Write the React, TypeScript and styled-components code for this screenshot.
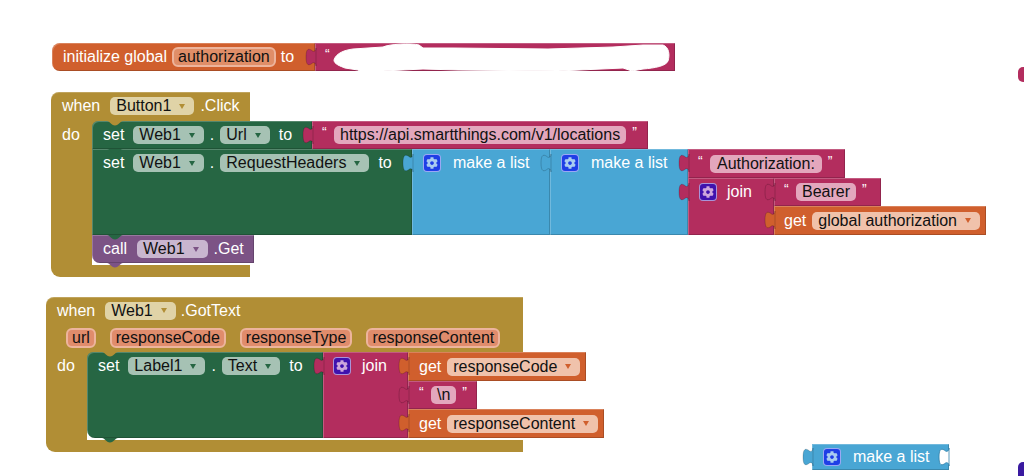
import styled, { createGlobalStyle } from "styled-components";
import { FaCog } from "react-icons/fa";

const ORANGE = "#d05f2d";
const MUSTARD = "#b18e35";
const GREEN = "#266643";
const PINK = "#b32d5e";
const BLUE = "#49a6d4";
const PURPLE = "#7c5385";

const GlobalStyle = createGlobalStyle`
  html, body {
    margin: 0;
    background: #fff;
    overflow: hidden;
  }
  body {
    font-family: "Liberation Sans", Arial, sans-serif;
    font-size: 16px;
    color: #fff;
  }
`;

const Canvas = styled.div`
  position: relative;
  width: 1024px;
  height: 476px;
  overflow: hidden;
  background: #fff;
`;

// top level blocks sit wherever the user dropped them on the workspace
const Placed = styled.div<{ $x: number; $y: number }>`
  position: absolute;
  left: ${(p) => p.$x}px;
  top: ${(p) => p.$y}px;
`;

const Row = styled.div`
  display: flex;
  align-items: flex-start;
`;

const Column = styled.div`
  display: flex;
  flex-direction: column;
`;

const Block = styled.div<{
  $color: string;
  $w: number;
  $h?: number;
  $radius?: string;
}>`
  position: relative;
  box-sizing: border-box;
  flex: none;
  width: ${(p) => p.$w}px;
  height: ${(p) => p.$h ?? 28}px;
  background: ${(p) => p.$color};
  border-radius: ${(p) => p.$radius ?? "0"};
  box-shadow: inset 1px 1px 0 rgba(255, 255, 255, 0.22),
    inset -1px -1px 0 rgba(0, 0, 0, 0.18);
`;

// shows mustard in the rounded top left corner of a first statement
const Backed = styled.div`
  flex: none;
  background: linear-gradient(${MUSTARD} 50%, transparent 50%);
`;

const Fields = styled.div<{ $pad?: number; $gap?: number; $height?: number }>`
  display: flex;
  align-items: center;
  height: ${(p) => p.$height ?? 28}px;
  padding-left: ${(p) => p.$pad ?? 11}px;
  gap: ${(p) => p.$gap ?? 9}px;
  white-space: nowrap;
`;

const Label = styled.span<{ $nudge?: number }>`
  color: #fff;
  margin-left: ${(p) => p.$nudge ?? 0}px;
`;

const Dot = styled.span`
  color: #fff;
  margin: 0 -3px;
`;

const Quote = styled.span`
  color: #fff;
  width: 6px;
  font-size: 14px;
  line-height: 14px;
  margin-top: -6px;
`;

const Pill = styled.span<{ $bg: string; $pad?: number }>`
  display: inline-flex;
  align-items: center;
  box-sizing: border-box;
  height: 18px;
  padding: 0 ${(p) => p.$pad ?? 6}px;
  color: #111;
  background: ${(p) => p.$bg};
  border-radius: 5px;
`;

const DropPill = styled(Pill)`
  padding-right: 9px;
`;

const ParamPill = styled(Pill)`
  height: 20px;
  border: 2px solid #edb49c;
  padding: 0 4px;
  border-radius: 6px;
`;

const Arrow = styled.i<{ $color: string }>`
  flex: none;
  width: 0;
  height: 0;
  margin-left: 8px;
  border-left: 3.5px solid transparent;
  border-right: 3.5px solid transparent;
  border-top: 5px solid ${(p) => p.$color};
`;

const GearBox = styled.span<{ $bg: string; $fg: string }>`
  display: inline-flex;
  align-items: center;
  justify-content: center;
  box-sizing: border-box;
  width: 18px;
  height: 18px;
  color: ${(p) => p.$fg};
  background: ${(p) => p.$bg};
  border: 1px solid rgba(255, 255, 255, 0.55);
  border-radius: 4px;
  font-size: 12px;
`;

const TabSvg = styled.svg<{ $top?: number; $right?: boolean }>`
  position: absolute;
  top: ${(p) => p.$top ?? 6}px;
  ${(p) => (p.$right ? "right: 0;" : "left: -9px;")}
  width: 10px;
  height: 16px;
  z-index: 2;
  overflow: visible;
`;

const NotchSvg = styled.svg<{ $left: number }>`
  position: absolute;
  left: ${(p) => p.$left}px;
  bottom: -5px;
  width: 16px;
  height: 5px;
  z-index: 3;
  overflow: visible;
`;

const HatTop = styled.div<{ $w: number; $h: number }>`
  position: relative;
  box-sizing: border-box;
  width: ${(p) => p.$w}px;
  height: ${(p) => p.$h}px;
  background: ${MUSTARD};
  border-radius: 8px 0 0 0;
  box-shadow: inset 0 1px 0 rgba(255, 255, 255, 0.2);
`;

const HatMiddle = styled.div`
  display: flex;
  align-items: stretch;
`;

const DoColumn = styled.div`
  flex: none;
  width: 41px;
  background: ${MUSTARD};
`;

const Statements = styled.div`
  display: flex;
  flex-direction: column;
  padding-bottom: 2px;
  & > * {
    flex: none;
  }
`;

const HatFoot = styled.div<{ $w: number }>`
  width: ${(p) => p.$w}px;
  height: 12px;
  background: ${MUSTARD};
  border-radius: 0 0 0 9px;
`;

const Scribble = styled.svg`
  position: absolute;
  left: 0;
  top: 0;
  width: 360px;
  height: 32px;
  overflow: visible;
  z-index: 2;
`;

const OffscreenBlob = styled.div<{ $top: number; $h: number; $color: string }>`
  position: absolute;
  left: 1018px;
  top: ${(p) => p.$top}px;
  width: 14px;
  height: ${(p) => p.$h}px;
  background: ${(p) => p.$color};
  border-radius: 5px;
`;

function Tab({
  fill,
  stroke,
  top,
  right,
}: {
  fill: string;
  stroke?: string;
  top?: number;
  right?: boolean;
}) {
  return (
    <TabSvg viewBox="0 0 10 16" $top={top} $right={right}>
      <path
        d="M10 -1 C10 2 8 3 6.5 2 C3 -1 0 -1 0 8 C0 17 3 17 6.5 14 C8 13 10 14 10 17 Z"
        fill={fill}
        stroke={stroke ?? "rgba(0,0,0,0.22)"}
        strokeWidth="0.8"
      />
    </TabSvg>
  );
}

function Notch({ color, left }: { color: string; left: number }) {
  return (
    <NotchSvg viewBox="0 0 16 5" $left={left}>
      <path d="M0 0 C3 0 4 4.5 8 4.5 C12 4.5 13 0 16 0 Z" fill={color} />
    </NotchSvg>
  );
}

function Dropdown({
  bg,
  arrow,
  children,
}: {
  bg: string;
  arrow: string;
  children: string;
}) {
  return (
    <DropPill $bg={bg}>
      {children}
      <Arrow $color={arrow} />
    </DropPill>
  );
}

function Mutator({ dark }: { dark?: boolean }) {
  return dark ? (
    <GearBox $bg="#3f12ae" $fg="#cda6dc">
      <FaCog />
    </GearBox>
  ) : (
    <GearBox $bg="#1f3fe6" $fg="#a9cdf0">
      <FaCog />
    </GearBox>
  );
}

function TextBlock({
  w,
  h,
  pad,
  pillPad,
  children,
}: {
  w: number;
  h?: number;
  pad?: number;
  pillPad?: number;
  children: string;
}) {
  return (
    <Block $color={PINK} $w={w} $h={h}>
      <Tab fill={PINK} />
      <Fields $pad={pad ?? 10} $gap={6} $height={h}>
        <Quote>“</Quote>
        <Pill $bg="#e3a7bd" $pad={pillPad}>
          {children}
        </Pill>
        <Quote>”</Quote>
      </Fields>
    </Block>
  );
}

function GetBlock({
  w,
  h,
  pad,
  children,
}: {
  w: number;
  h?: number;
  pad?: number;
  children: string;
}) {
  return (
    <Block $color={ORANGE} $w={w} $h={h}>
      <Tab fill={ORANGE} />
      <Fields $pad={pad ?? 10} $gap={6} $height={h}>
        <Label>get</Label>
        <Dropdown bg="#f0c2ab" arrow={ORANGE}>
          {children}
        </Dropdown>
      </Fields>
    </Block>
  );
}

function ListBlock({ w, h }: { w: number; h: number }) {
  return (
    <Block $color={BLUE} $w={w} $h={h}>
      <Tab fill={BLUE} />
      <Fields $gap={12}>
        <Mutator />
        <Label>make a list</Label>
      </Fields>
    </Block>
  );
}

function InitGlobal() {
  return (
    <Row>
      <Block $color={ORANGE} $w={263} $radius="8px 0 0 8px">
        <Fields $gap={5}>
          <Label>initialize global</Label>
          <ParamPill $bg="#e08e68">authorization</ParamPill>
          <Label>to</Label>
        </Fields>
      </Block>
      <Block $color={PINK} $w={360}>
        <Tab fill={PINK} />
        <Fields $pad={10}>
          <Quote>“</Quote>
        </Fields>
        <Scribble viewBox="0 0 360 32">
          <path
            d="M19 17 C21 10 30 7 38 6 L68 4 C74 1 96 0 104 2 L108 5 L138 5 L233 6 L298 4 L328 2 L348 2 C354 4 355 12 353 18 C351 23 340 25 328 26 L317 28 L308 25 L243 28 L143 27 L108 26 L68 28 L58 29 L46 29 L43 27 L30 25 C25 23 19 21 19 17 Z"
            fill="#fff"
            stroke="#fff"
            strokeLinejoin="round"
          />
        </Scribble>
      </Block>
    </Row>
  );
}

function ButtonClick() {
  return (
    <Column>
      <HatTop $w={199} $h={29}>
        <Fields $gap={10}>
          <Label>when</Label>
          <Dropdown bg="#e0d3a7" arrow={MUSTARD}>
            Button1
          </Dropdown>
          <Label $nudge={-4}>.Click</Label>
        </Fields>
        <Notch color={MUSTARD} left={56} />
      </HatTop>
      <HatMiddle>
        <DoColumn>
          <Fields>
            <Label>do</Label>
          </Fields>
        </DoColumn>
        <Statements>
          <Row>
            <Backed>
              <Block $color={GREEN} $w={220} $radius="6px 0 0 0">
                <Fields>
                  <Label>set</Label>
                  <Dropdown bg="#a6c2b4" arrow={GREEN}>
                    Web1
                  </Dropdown>
                  <Dot>.</Dot>
                  <Dropdown bg="#a6c2b4" arrow={GREEN}>
                    Url
                  </Dropdown>
                  <Label>to</Label>
                </Fields>
                <Notch color={GREEN} left={15} />
              </Block>
            </Backed>
            <TextBlock w={336}>https://api.smartthings.com/v1/locations</TextBlock>
          </Row>
          <Row>
            <Block $color={GREEN} $w={320} $h={86}>
              <Fields>
                <Label>set</Label>
                <Dropdown bg="#a6c2b4" arrow={GREEN}>
                  Web1
                </Dropdown>
                <Dot>.</Dot>
                <Dropdown bg="#a6c2b4" arrow={GREEN}>
                  RequestHeaders
                </Dropdown>
                <Label>to</Label>
              </Fields>
              <Notch color={GREEN} left={15} />
            </Block>
            <ListBlock w={138} h={86} />
            <ListBlock w={138} h={86} />
            <Column>
              <TextBlock w={157} h={29} pillPad={7}>
                Authorization:
              </TextBlock>
              <Row>
                <Block $color={PINK} $w={86} $h={57}>
                  <Tab fill={PINK} />
                  <Fields $gap={10}>
                    <Mutator dark />
                    <Label>join</Label>
                  </Fields>
                </Block>
                <Column>
                  <TextBlock w={107}>Bearer</TextBlock>
                  <GetBlock w={212} h={29}>
                    global authorization
                  </GetBlock>
                </Column>
              </Row>
            </Column>
          </Row>
          <Block $color={PURPLE} $w={162} $radius="0 0 0 8px">
            <Fields $gap={10}>
              <Label>call</Label>
              <Dropdown bg="#c9b6cf" arrow={PURPLE}>
                Web1
              </Dropdown>
              <Label $nudge={-4}>.Get</Label>
            </Fields>
            <Notch color={PURPLE} left={15} />
          </Block>
        </Statements>
      </HatMiddle>
      <HatFoot $w={199} />
    </Column>
  );
}

function WebGotText() {
  return (
    <Column>
      <HatTop $w={477} $h={55}>
        <Fields $gap={10} $height={27}>
          <Label>when</Label>
          <Dropdown bg="#e0d3a7" arrow={MUSTARD}>
            Web1
          </Dropdown>
          <Label $nudge={-5}>.GotText</Label>
        </Fields>
        <Fields $pad={20} $gap={14} $height={28}>
          <ParamPill $bg="#e08c6c">url</ParamPill>
          <ParamPill $bg="#e08c6c">responseCode</ParamPill>
          <ParamPill $bg="#e08c6c">responseType</ParamPill>
          <ParamPill $bg="#e08c6c">responseContent</ParamPill>
        </Fields>
        <Notch color={MUSTARD} left={56} />
      </HatTop>
      <HatMiddle>
        <DoColumn>
          <Fields>
            <Label>do</Label>
          </Fields>
        </DoColumn>
        <Statements>
          <Row>
            <Backed>
              <Block $color={GREEN} $w={236} $h={86} $radius="6px 0 0 8px">
                <Fields>
                  <Label>set</Label>
                  <Dropdown bg="#a6c2b4" arrow={GREEN}>
                    Label1
                  </Dropdown>
                  <Dot>.</Dot>
                  <Dropdown bg="#a6c2b4" arrow={GREEN}>
                    Text
                  </Dropdown>
                  <Label>to</Label>
                </Fields>
                <Notch color={GREEN} left={15} />
              </Block>
            </Backed>
            <Block $color={PINK} $w={85} $h={86}>
              <Tab fill={PINK} />
              <Fields $pad={10} $gap={11}>
                <Mutator dark />
                <Label>join</Label>
              </Fields>
            </Block>
            <Column>
              <GetBlock w={178} h={29} pad={11}>
                responseCode
              </GetBlock>
              <TextBlock w={69} pad={11}>
                \n
              </TextBlock>
              <GetBlock w={196} h={29} pad={11}>
                responseContent
              </GetBlock>
            </Column>
          </Row>
        </Statements>
      </HatMiddle>
      <HatFoot $w={477} />
    </Column>
  );
}

function StrayList() {
  return (
    <Block $color={BLUE} $w={137} $h={26}>
      <Tab fill={BLUE} top={5} />
      <Tab fill="#fff" stroke="#2f7fa8" top={5} right />
      <Fields $gap={12} $height={26}>
        <Mutator />
        <Label>make a list</Label>
      </Fields>
    </Block>
  );
}

export default function App() {
  return (
    <>
      <GlobalStyle />
      <Canvas>
        <Placed $x={52} $y={43}>
          <InitGlobal />
        </Placed>
        <Placed $x={51} $y={92}>
          <ButtonClick />
        </Placed>
        <Placed $x={46} $y={297}>
          <WebGotText />
        </Placed>
        <Placed $x={812} $y={444}>
          <StrayList />
        </Placed>
        <OffscreenBlob $top={67} $h={15} $color={PINK} />
        <OffscreenBlob $top={462} $h={20} $color="#3a1aa0" />
      </Canvas>
    </>
  );
}
